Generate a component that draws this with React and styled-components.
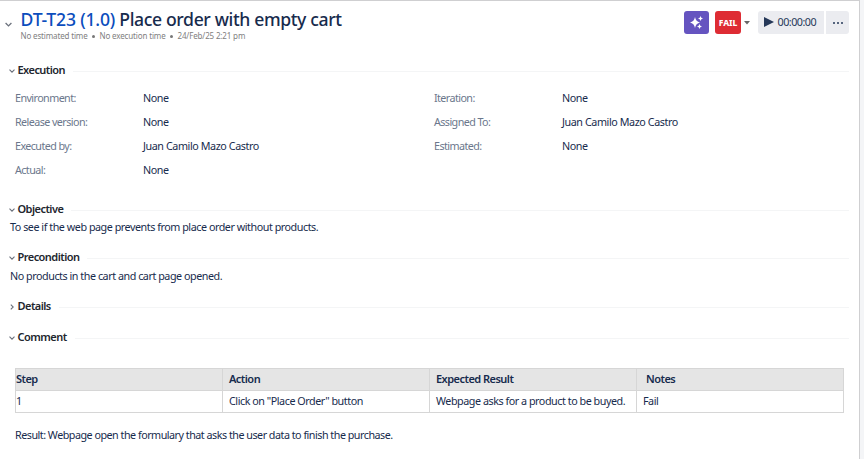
import React from "react";
import styled, { createGlobalStyle } from "styled-components";

const GlobalStyle = createGlobalStyle`
  * { box-sizing: border-box; }
  body {
    margin: 0;
    background: #f4f5f7;
    color: #172b4d;
    font: 10.75px/16px "Noto Sans", "Open Sans", sans-serif;
    letter-spacing: -0.46px;
    overflow: hidden;
  }
`;

const Panel = styled.main`
  width: 860px;
  height: 459px;
  padding: 0 10px 0 9px;
  background: #fff;
  border-top: 1px solid #cfcfd1;
  border-right: 1px solid #cfcfd1;
`;

const Header = styled.header`
  display: flex;
  height: 61px;
  padding-top: 8px;
  margin-left: -4px;
`;

const HeaderToggle = styled.span`
  display: flex;
  width: 15.5px;
  padding-top: 12px;
`;

const Heading = styled.div`
  flex: 1;
`;

const Title = styled.h1`
  margin: 0;
  font-size: 17.6px;
  line-height: 20px;
  font-weight: 500;
  letter-spacing: -0.36px;
  white-space: nowrap;
`;

const CaseKey = styled.span`
  color: #0b4dbd;
  letter-spacing: -0.2px;
`;

const Meta = styled.div`
  display: flex;
  align-items: center;
  gap: 4.5px;
  font-size: 8px;
  line-height: 14px;
  letter-spacing: -0.15px;
  color: #808080;
`;

const Dot = styled.i`
  width: 3px;
  height: 3px;
  border-radius: 50%;
  background: #777;
`;

const Actions = styled.div`
  display: flex;
  height: 23px;
  margin-top: 2px;
`;

const Button = styled.button`
  display: flex;
  align-items: center;
  justify-content: center;
  width: ${(p) => p.$width}px;
  height: 23px;
  padding: 0;
  border: 0;
  border-radius: ${(p) => p.$radius || "3px"};
  background: ${(p) => p.$bg || "#ebecf0"};
  color: ${(p) => p.$color || "#253858"};
  font: inherit;
  letter-spacing: inherit;
`;

const AiButton = styled(Button)`
  margin-right: 6px;
`;

const StatusButton = styled(Button)`
  font-size: 8.5px;
  font-weight: 800;
  letter-spacing: -0.1px;
`;

const StatusMenu = styled.span`
  display: flex;
  align-items: center;
  justify-content: center;
  width: 17px;
  padding-right: 5px;
`;

const TimerButton = styled(Button)`
  justify-content: flex-start;
  gap: 4px;
  margin-right: 2px;
  padding-left: 5.5px;
  padding-bottom: 2px;
  letter-spacing: -0.5px;
`;

const SectionHeader = styled.h2`
  display: flex;
  align-items: center;
  height: 16px;
  margin: 0;
  font-size: 11px;
  font-weight: 600;
  letter-spacing: -0.54px;
  color: #22262e;

  &::after {
    content: "";
    flex: 1;
    height: 1px;
    margin: 2px 0 0 8px;
    background: #f4f5f6;
  }
`;

const SectionToggle = styled.span`
  display: flex;
  width: 8.5px;
  margin-top: 2px;
`;

const Section = styled.section`
  height: ${(p) => p.$height}px;
`;

const Fields = styled.dl`
  display: grid;
  grid-template-columns: 128px 291px 128px 1fr;
  grid-auto-rows: 24px;
  margin: 8px 0 0 6px;
  line-height: 24px;
`;

const Label = styled.dt`
  grid-column: ${(p) => p.$column};
  color: #6b778c;
  letter-spacing: -0.58px;
`;

const Value = styled.dd`
  margin: 0;
  letter-spacing: -0.42px;
`;

const Text = styled.p`
  margin: ${(p) => p.$margin || "2px 0 0 1px"};
  letter-spacing: ${(p) => p.$spacing || "-0.46px"};
  white-space: nowrap;
`;

const Table = styled.table`
  width: 829px;
  height: 45px;
  margin: 23px 0 0 6px;
  border-collapse: collapse;
  table-layout: fixed;
`;

const Th = styled.th`
  height: 22px;
  padding: 0 0 2px ${(p) => p.$pad}px;
  border: 1px solid #d6d6d6;
  background: #e5e5e5;
  font-size: 11px;
  font-weight: 600;
  text-align: left;
  letter-spacing: -0.53px;
`;

const Td = styled.td`
  height: 22px;
  padding: 0 0 2px ${(p) => p.$pad}px;
  border: 1px solid #d6d6d6;
  white-space: nowrap;
`;

const Chevron = ({ size = 6, right = false }) => (
  <svg width={size} height={size} viewBox="0 0 6 6" fill="none" stroke="#6b717c" strokeWidth="1.1">
    <path d={right ? "M1.8 .6 4.2 3 1.8 5.4" : "M.5 1.7 3 4.2 5.5 1.7"} />
  </svg>
);

const Sparkles = () => (
  <svg width="13" height="13" viewBox="0 0 13 13" fill="#fff">
    <path d="M5 1Q5.800 5.700 10 6.500 5.800 7.300 5 12 4.200 7.300 0 6.500 4.200 5.700 5 1Z" />
    <path d="M10.500 0Q10.900 2.100 13 2.500 10.900 2.900 10.500 5 10.100 2.900 8 2.500 10.100 2.100 10.500 0Z" />
    <path d="M9.500 8Q9.900 10.100 12 10.500 9.900 10.900 9.500 13 9.100 10.900 7 10.500 9.100 10.100 9.500 8Z" />
  </svg>
);

const SectionTitle = ({ children, closed }) => (
  <SectionHeader>
    <SectionToggle><Chevron right={closed} /></SectionToggle>
    {children}
  </SectionHeader>
);

export default function App() {
  return (
    <>
      <GlobalStyle />
      <Panel>
        <Header>
          <HeaderToggle><Chevron size={7} /></HeaderToggle>
          <Heading>
            <Title><CaseKey>DT-T23 (1.0)</CaseKey> Place order with empty cart</Title>
            <Meta>
              <span>No estimated time</span><Dot />
              <span>No execution time</span><Dot />
              <span>24/Feb/25 2:21 pm</span>
            </Meta>
          </Heading>
          <Actions>
            <AiButton $width={25} $bg="#6554c0" aria-label="AI assistant"><Sparkles /></AiButton>
            <StatusButton $width={26} $bg="#de2c34" $color="#fff">FAIL</StatusButton>
            <StatusMenu>
              <svg width="6" height="4" viewBox="0 0 6 4" fill="#666"><path d="M0 0H6L3 3.500Z" /></svg>
            </StatusMenu>
            <TimerButton $width={66} $radius="3px 0 0 3px">
              <svg width="10" height="10" viewBox="0 0 10 10" fill="#253858"><path d="M0 0 10 5 0 10Z" /></svg>
              00:00:00
            </TimerButton>
            <Button $width={23} $radius="0 3px 3px 0" aria-label="More">
              <svg width="10" height="2" viewBox="0 0 10 2" fill="#253858">
                <circle cx="1" cy="1" r="1" /><circle cx="5" cy="1" r="1" /><circle cx="9" cy="1" r="1" />
              </svg>
            </Button>
          </Actions>
        </Header>

        <Section $height={139}>
          <SectionTitle>Execution</SectionTitle>
          <Fields>
            <Label $column={1}>Environment:</Label><Value>None</Value>
            <Label $column={3}>Iteration:</Label><Value>None</Value>
            <Label $column={1}>Release version:</Label><Value>None</Value>
            <Label $column={3}>Assigned To:</Label><Value>Juan Camilo Mazo Castro</Value>
            <Label $column={1}>Executed by:</Label><Value>Juan Camilo Mazo Castro</Value>
            <Label $column={3}>Estimated:</Label><Value>None</Value>
            <Label $column={1}>Actual:</Label><Value>None</Value>
          </Fields>
        </Section>

        <Section $height={48}>
          <SectionTitle>Objective</SectionTitle>
          <Text>To see if the web page prevents from place order without products.</Text>
        </Section>

        <Section $height={49}>
          <SectionTitle>Precondition</SectionTitle>
          <Text $margin="3px 0 0 1px">No products in the cart and cart page opened.</Text>
        </Section>

        <Section $height={31}>
          <SectionTitle closed>Details</SectionTitle>
        </Section>

        <Section $height={120}>
          <SectionTitle>Comment</SectionTitle>
          <Table>
            <thead>
              <tr><Th $pad={0}>Step</Th><Th $pad={6}>Action</Th><Th $pad={6}>Expected Result</Th><Th $pad={9}>Notes</Th></tr>
            </thead>
            <tbody>
              <tr>
                <Td $pad={0}>1</Td>
                <Td $pad={6}>Click on "Place Order" button</Td>
                <Td $pad={6}>Webpage asks for a product to be buyed.</Td>
                <Td $pad={6}>Fail</Td>
              </tr>
            </tbody>
          </Table>
          <Text $margin="14px 0 0 6px" $spacing="-0.5px">Result: Webpage open the formulary that asks the user data to finish the purchase.</Text>
        </Section>
      </Panel>
    </>
  );
}
